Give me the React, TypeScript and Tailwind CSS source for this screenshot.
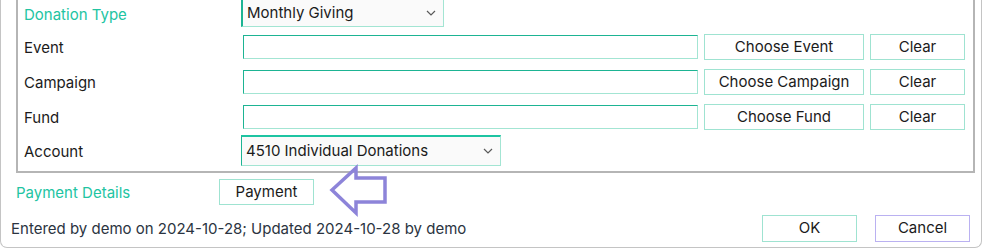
const labelCls = 'text-[15px] leading-[18px] text-[#1b1b1b]';
const btnCls =
	'flex h-[26px] items-center justify-center border border-[#9fe3d1] bg-white text-[15px] text-[#1b1b1b]';

const Chevron = () => (
	<svg width="10" height="6" viewBox="0 0 10 6" className="shrink-0">
		<path d="M1 1l4 4 4-4" fill="none" stroke="#5a5a5a" strokeWidth="1.2" />
	</svg>
);

const LookupRow = ({ label, chooseText, mt }: { label: string; chooseText: string; mt: string }) => (
	<div className={`flex h-[26px] items-center ${mt}`}>
		<div className="w-[225px] pl-[6px]">
			<span className={labelCls}>{label}</span>
		</div>
		<div className="h-[24px] w-[455px] border border-t-[#1db493] border-l-[#1db493] border-r-[#a3e5d3] border-b-[#a3e5d3] bg-white" />
		<button className={`${btnCls} ml-[6px] w-[160px]`}>{chooseText}</button>
		<button className={`${btnCls} ml-[6px] w-[95px]`}>Clear</button>
	</div>
);

export default function App() {
	return (
		<div className="relative box-border h-[248px] w-[982px] rounded-b-[7px] border-x border-b border-[#c4c4c4] bg-white font-['Inter','Liberation_Sans',sans-serif]">
			<div className="ml-[15px] mr-[6px] border-x-2 border-b-2 border-[#b5b5b5] pb-[5px]">
				<div className="flex h-[27px] items-center">
					<div className="w-[223px] pl-[6px]">
						<span className="text-[15px] leading-[18px] text-[#22c4a2]">Donation Type</span>
					</div>
					<div className="flex h-[27px] w-[203px] items-center justify-between border-b border-l-2 border-r border-b-[#a3e5d3] border-l-[#1db493] border-r-[#a3e5d3] bg-[#fafafa] pl-[4px] pr-[7px]">
						<span className={labelCls}>Monthly Giving</span>
						<Chevron />
					</div>
				</div>
				<LookupRow label="Event" chooseText="Choose Event" mt="mt-[7px]" />
				<LookupRow label="Campaign" chooseText="Choose Campaign" mt="mt-[9px]" />
				<LookupRow label="Fund" chooseText="Choose Fund" mt="mt-[9px]" />
				<div className="mt-[5px] flex h-[31px] items-center">
					<div className="w-[223px] pl-[6px]">
						<span className={labelCls}>Account</span>
					</div>
					<div className="flex h-[31px] w-[260px] items-center justify-between border border-b-[#a3e5d3] border-l-[#1db493] border-r-[#a3e5d3] border-t-2 border-t-[#1dc4a2] bg-[#fafafa] pl-[4px] pr-[7px]">
						<span className={labelCls}>4510 Individual Donations</span>
						<Chevron />
					</div>
				</div>
			</div>

			<div className="mt-[6px] flex h-[26px] items-start pl-[15px]">
				<div className="mt-[1px] w-[203px]">
					<span className="text-[15px] leading-[18px] text-[#22c4a2]">Payment Details</span>
				</div>
				<button className={`${btnCls} w-[95px]`}>Payment</button>
			</div>

			<div className="mt-[10px] flex h-[27px] items-center justify-between pl-[10px] pr-[11px]">
				<span className="text-[15px] leading-[18px] text-[#2b3441]">
					Entered by demo on 2024-10-28; Updated 2024-10-28 by demo
				</span>
				<div className="flex gap-[18px]">
					<button className="flex h-[27px] w-[95px] items-center justify-center border border-[#9fe3d1] bg-white text-[15px] text-[#1b1b1b]">
						OK
					</button>
					<button className="flex h-[27px] w-[95px] items-center justify-center border border-[#bab1f1] bg-white text-[15px] text-[#1b1b1b]">
						Cancel
					</button>
				</div>
			</div>

			{/* annotation arrow pointing at the Payment button */}
			<svg
				className="absolute left-[327px] top-[164px]"
				width="62"
				height="54"
				viewBox="0 0 62 54"
			>
				<polygon
					points="4,26 28,4 28,14 57,14 57,38 28,38 28,49"
					fill="none"
					stroke="#8d84d9"
					strokeWidth="3.5"
					strokeLinejoin="miter"
				/>
			</svg>
		</div>
	);
}
